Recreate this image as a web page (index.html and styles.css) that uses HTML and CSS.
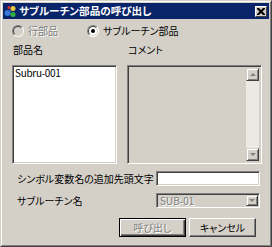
FILE: index.html
```html
<!DOCTYPE html>
<html lang="ja">
<head>
<meta charset="UTF-8">
<title>サブルーチン部品の呼び出し</title>
<link rel="stylesheet" href="styles.css">
</head>
<body>

<div class="window">
  <div class="frame">
    <!-- Barra de título -->
    <div class="titlebar">
      <svg class="app-icon" width="13" height="13" viewBox="0 0 13 13">
        <line x1="4" y1="8" x2="9" y2="4" stroke="#6a7a8a" stroke-width="1"/>
        <line x1="4" y1="8" x2="8" y2="10" stroke="#6a7a8a" stroke-width="1"/>
        <circle cx="9" cy="3.5" r="2.5" fill="#e8c840"/>
        <circle cx="3.5" cy="8" r="3" fill="#3a78d8"/>
        <circle cx="9" cy="9.5" r="2.5" fill="#30b040"/>
        <circle cx="5" cy="2.5" r="1.6" fill="#d83030"/>
      </svg>
      <span class="title">サブルーチン部品の呼び出し</span>
      <span class="close-btn">
        <svg width="8" height="7" viewBox="0 0 8 7">
          <path d="M0 0h2l2 2 2-2h2v1l-2.5 2.5 2.5 2.5v1h-2l-2-2-2 2h-2v-1l2.5-2.5-2.5-2.5z" fill="#000"/>
        </svg>
      </span>
    </div>

    <div class="content">
      <div class="radios">
        <label class="radio disabled"><span class="dot"></span>行部品</label>
        <label class="radio checked"><span class="dot"></span>サブルーチン部品</label>
      </div>

      <div class="panels">
        <div class="panel parts">
          <div class="caption">部品名</div>
          <div class="listbox">Subru-001</div>
        </div>
        <div class="panel comment">
          <div class="caption">コメント</div>
          <div class="memo">
            <div class="vscroll">
              <span class="sb-btn"><span class="arrow up"></span></span>
              <span class="sb-track"></span>
              <span class="sb-btn"><span class="arrow down"></span></span>
            </div>
          </div>
        </div>
      </div>

      <div class="field">
        <span class="field-label">シンボル変数名の追加先頭文字</span>
        <span class="textbox"></span>
      </div>
      <div class="field">
        <span class="field-label">サブルーチン名</span>
        <span class="combo">
          <span class="combo-text">SUB-01</span>
          <span class="sb-btn"><span class="arrow down"></span></span>
        </span>
      </div>

      <div class="buttons">
        <span class="btn default disabled"><span>呼び出し</span></span>
        <span class="btn"><span>キャンセル</span></span>
      </div>
    </div>
  </div>
</div>

</body>
</html>
```

FILE: styles.css
```css
body {
  margin: 0;
  background: #d4d0c8;
  font-family: "Noto Sans CJK JP", "Liberation Sans", sans-serif;
  font-size: 10px;
  font-feature-settings: "palt";
  color: #000;
  white-space: nowrap;
}

.window {
  width: 272px;
  height: 247px;
  box-sizing: border-box;
  border: 1px solid;
  border-color: #d4d0c8 #404040 #404040 #d4d0c8;
}

.frame {
  height: 100%;
  box-sizing: border-box;
  border: 1px solid;
  border-color: #fff #808080 #808080 #fff;
  padding: 1px;
}

/* Barra de título */
.titlebar {
  height: 16px;
  background: #0a246a;
  display: flex;
  align-items: center;
  padding: 0 2px 0 1px;
}

.app-icon { margin-right: 2px; }

.title {
  flex: 1;
  color: #fff;
  font-weight: bold;
  font-size: 10.6px;
  line-height: 16px;
}

.close-btn {
  width: 12px;
  height: 11px;
  box-sizing: border-box;
  background: #d4d0c8;
  border: 1px solid;
  border-color: #fff #404040 #404040 #fff;
  display: flex;
  justify-content: center;
  align-items: center;
}

.content {
  padding: 5px 7px 0 9px;
}

/* Radios */
.radios {
  display: flex;
  height: 14px;
  align-items: center;
}

.radio {
  display: flex;
  align-items: center;
  line-height: 14px;
}

.radio.disabled { width: 75px; color: #808080; text-shadow: 1px 1px #fff; }

.dot {
  width: 10px;
  height: 10px;
  border-radius: 50%;
  border: 1px solid;
  border-color: #808080 #fff #fff #808080;
  background: #fff;
  margin-right: 4px;
  position: relative;
}

.dot::before {
  content: "";
  position: absolute;
  inset: 0;
  border-radius: 50%;
  border: 1px solid;
  border-color: #404040 #d4d0c8 #d4d0c8 #404040;
}

.radio.disabled .dot { background: #d4d0c8; }

.radio.checked .dot::after {
  content: "";
  position: absolute;
  width: 4px;
  height: 4px;
  border-radius: 50%;
  background: #000;
  left: 3px;
  top: 3px;
}

/* Paneles */
.panels {
  display: flex;
  gap: 10px;
  margin-top: 6px;
}

.caption {
  height: 12px;
  line-height: 12px;
  margin: 0 0 9px 1px;
}

.parts { width: 105px; }
.comment { width: 135px; }

.listbox, .memo, .textbox, .combo {
  box-sizing: border-box;
  border: 1px solid;
  border-color: #808080 #fff #fff #808080;
  box-shadow: inset 1px 1px #404040, inset -1px -1px #d4d0c8;
}

.listbox {
  height: 99px;
  background: #fff;
  padding: 1px 2px;
  line-height: 12px;
  letter-spacing: -0.3px;
}

.memo {
  height: 99px;
  background: #d4d0c8;
  padding: 2px;
  display: flex;
  justify-content: flex-end;
}

.vscroll {
  width: 13px;
  display: flex;
  flex-direction: column;
}

.sb-track {
  flex: 1;
  background: #ebe9e4;
}

.sb-btn {
  width: 13px;
  height: 13px;
  box-sizing: border-box;
  background: #d4d0c8;
  border: 1px solid;
  border-color: #d4d0c8 #404040 #404040 #d4d0c8;
  box-shadow: inset 1px 1px #fff, inset -1px -1px #808080;
  display: flex;
  justify-content: center;
  align-items: center;
}

.arrow {
  width: 0;
  height: 0;
  border-left: 3px solid transparent;
  border-right: 3px solid transparent;
}

.arrow.up { border-bottom: 3px solid #808080; }
.arrow.down { border-top: 3px solid #808080; }

/* Campos */
.field {
  display: flex;
  align-items: center;
  justify-content: space-between;
  height: 15px;
  margin-top: 7px;
  padding: 0 2px 0 5px;
}

.textbox {
  width: 104px;
  height: 15px;
  background: #fff;
}

.combo {
  width: 104px;
  height: 15px;
  background: #d4d0c8;
  display: flex;
  align-items: center;
  padding: 1px;
}

.combo-text {
  flex: 1;
  color: #808080;
  text-shadow: 1px 1px #fff;
  padding-left: 2px;
  line-height: 11px;
}

.combo .sb-btn { width: 12px; height: 11px; }

/* Botones */
.buttons {
  display: flex;
  justify-content: flex-end;
  gap: 3px;
  margin-top: 10px;
  padding-right: 6px;
}

.btn {
  width: 67px;
  height: 19px;
  box-sizing: border-box;
  border: 1px solid;
  border-color: #fff #404040 #404040 #fff;
  box-shadow: inset -1px -1px #808080;
  display: flex;
  justify-content: center;
  align-items: center;
  line-height: 14px;
}

.btn.default {
  border: 1px solid #000;
  box-shadow: inset 1px 1px #fff, inset -1px -1px #404040, inset -2px -2px #808080;
}

.btn.disabled { color: #808080; text-shadow: 1px 1px #fff; }
```
